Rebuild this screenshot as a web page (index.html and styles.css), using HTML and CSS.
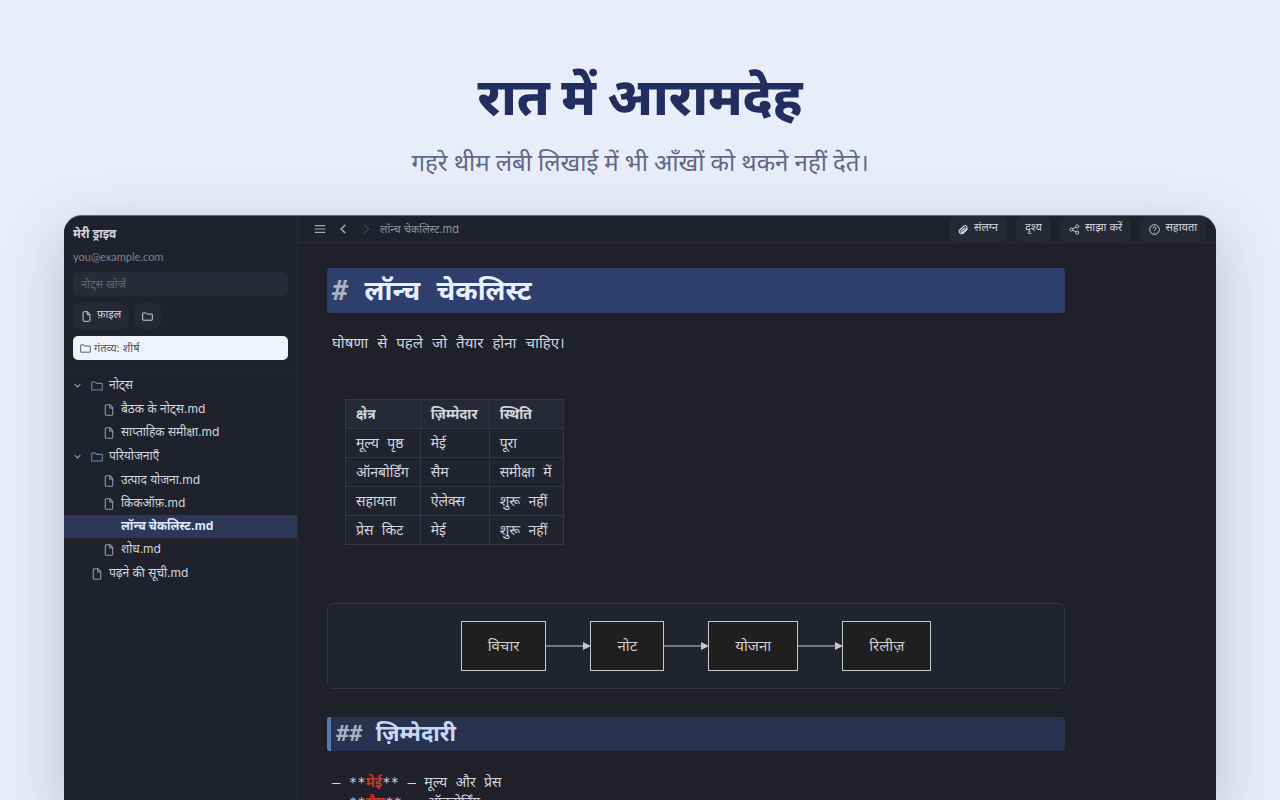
FILE: index.html
```html
<!DOCTYPE html>
<html lang="hi">
<head>
  <meta charset="UTF-8" />
  <meta name="viewport" content="width=device-width, initial-scale=1.0" />
  <title>रात में आरामदेह</title>
  <link rel="stylesheet" href="styles.css">
</head>
<body>
  <svg class="sprite" aria-hidden="true">
    <symbol id="file" viewBox="0 0 16 16">
      <path d="M9.5 1H4.200A1.200 1.200 0 0 0 3 2.200v11.600A1.200 1.200 0 0 0 4.200 15h7.600a1.200 1.200 0 0 0 1.200-1.200V4.800z M9 1.200v4h4" />
    </symbol>
    <symbol id="folder" viewBox="0 0 16 16">
      <path d="M1 13V3.300q0-.6.6-.6h4l1.600 1.800h7.200q.6 0 .6.6V13q0 .4-.4.400H1.400Q1 13.400 1 13z" />
    </symbol>
    <symbol id="down" viewBox="0 0 16 16">
      <path d="M3 5.5l5 5 5-5" />
    </symbol>
  </svg>

  <header class="hero">
    <h1>रात में आरामदेह</h1>
    <p>गहरे थीम लंबी लिखाई में भी आँखों को थकने नहीं देते।</p>
  </header>

  <div class="window">
    <aside class="sidebar">
      <div class="drive">
        <h2>मेरी ड्राइव</h2>
        <p class="email">you@example.com</p>
        <input type="search" class="search" placeholder="नोट्स खोजें" aria-label="नोट्स खोजें" />
        <div class="actions">
          <button class="btn"><svg class="icon"><use href="#file" /></svg><span>फ़ाइल</span></button>
          <button class="btn" aria-label="फ़ोल्डर"><svg class="icon"><use href="#folder" /></svg></button>
        </div>
        <button class="target"><svg class="icon"><use href="#folder" /></svg>गंतव्य: शीर्ष</button>
      </div>

      <ul class="tree">
        <li>
          <a href="#" class="row folder"><svg class="chevron"><use href="#down" /></svg><svg class="icon"><use href="#folder" /></svg>नोट्स</a>
          <ul>
            <li><a href="#" class="row"><svg class="icon"><use href="#file" /></svg>बैठक के नोट्स.md</a></li>
            <li><a href="#" class="row"><svg class="icon"><use href="#file" /></svg>साप्ताहिक समीक्षा.md</a></li>
          </ul>
        </li>
        <li>
          <a href="#" class="row folder"><svg class="chevron"><use href="#down" /></svg><svg class="icon"><use href="#folder" /></svg>परियोजनाएँ</a>
          <ul>
            <li><a href="#" class="row"><svg class="icon"><use href="#file" /></svg>उत्पाद योजना.md</a></li>
            <li><a href="#" class="row"><svg class="icon"><use href="#file" /></svg>किकऑफ़.md</a></li>
            <li><a href="#" class="row active"><svg class="icon"></svg>लॉन्च चेकलिस्ट.md</a></li>
            <li><a href="#" class="row"><svg class="icon"><use href="#file" /></svg>शोध.md</a></li>
          </ul>
        </li>
        <li><a href="#" class="row root"><svg class="icon"><use href="#file" /></svg>पढ़ने की सूची.md</a></li>
      </ul>
    </aside>

    <main class="main">
      <div class="toolbar">
        <button class="nav-btn" aria-label="मेनू"><svg viewBox="0 0 16 16"><path d="M1 3.500h14M1 8h14M1 12.500h14" /></svg></button>
        <button class="nav-btn back" aria-label="पीछे"><svg viewBox="0 0 16 16"><path d="M11 2.500L5.500 8l5.500 5.500" /></svg></button>
        <button class="nav-btn" aria-label="आगे" disabled><svg viewBox="0 0 16 16"><path d="M6 2.500L11.500 8L6 13.500" /></svg></button>
        <span class="filename">लॉन्च चेकलिस्ट.md</span>
        <div class="tools">
          <button class="btn"><svg class="icon" viewBox="0 0 16 16"><path d="M14 7l-6.200 6.200a3.400 3.400 0 0 1-4.900-4.800l5.600-5.300a2.600 2.600 0 0 1 3.700 3.700l-5.500 5.300a1.200 1.200 0 0 1-1.800-1.700l5-4.900" stroke-width="1.700" /></svg><span>संलग्न</span></button>
          <button class="btn"><span>दृश्य</span></button>
          <button class="btn"><svg class="icon" viewBox="0 0 16 16"><circle cx="3.500" cy="8" r="2.200" /><circle cx="12" cy="3.500" r="2.200" /><circle cx="12" cy="12.500" r="2.200" /><path d="M5.500 7l4.500-2.500M5.500 9l4.500 2.500" /></svg><span>साझा करें</span></button>
          <button class="btn"><svg class="icon" viewBox="0 0 16 16"><circle cx="8" cy="8" r="7" /><path d="M5.900 6.400a2.100 2.100 0 1 1 3.300 1.700c-.8.500-1.200.8-1.200 1.700M8 11.400v.9" /></svg><span>सहायता</span></button>
        </div>
      </div>

      <article class="doc">
        <h2 class="line-h1"><span class="mark">#</span> लॉन्च चेकलिस्ट</h2>
        <p class="intro">घोषणा से पहले जो तैयार होना चाहिए।</p>

        <table>
          <thead>
            <tr><th>क्षेत्र</th><th>ज़िम्मेदार</th><th>स्थिति</th></tr>
          </thead>
          <tbody>
            <tr><td>मूल्य पृष्ठ</td><td>मेई</td><td>पूरा</td></tr>
            <tr><td>ऑनबोर्डिंग</td><td>सैम</td><td>समीक्षा में</td></tr>
            <tr><td>सहायता</td><td>ऐलेक्स</td><td>शुरू नहीं</td></tr>
            <tr><td>प्रेस किट</td><td>मेई</td><td>शुरू नहीं</td></tr>
          </tbody>
        </table>

        <div class="diagram">
          <div class="node">विचार</div>
          <svg class="arrow" viewBox="0 0 44 10"><path d="M0 5h38" /><path class="head" d="M37 1l8 4-8 4z" /></svg>
          <div class="node">नोट</div>
          <svg class="arrow" viewBox="0 0 44 10"><path d="M0 5h38" /><path class="head" d="M37 1l8 4-8 4z" /></svg>
          <div class="node">योजना</div>
          <svg class="arrow" viewBox="0 0 44 10"><path d="M0 5h38" /><path class="head" d="M37 1l8 4-8 4z" /></svg>
          <div class="node">रिलीज़</div>
        </div>

        <h3 class="line-h2"><span class="mark">##</span> ज़िम्मेदारी</h3>
        <p>— **<strong>मेई</strong>** — मूल्य और प्रेस</p>
        <p>— **<strong>सैम</strong>** — ऑनबोर्डिंग</p>
      </article>
    </main>
  </div>
</body>
</html>
```

FILE: styles.css
```css
* {
  box-sizing: border-box;
}

body {
  margin: 0;
  height: 100vh;
  display: flex;
  flex-direction: column;
  overflow: hidden;
  background-color: #e9edf9;
  font-family: Inter, "Noto Sans Devanagari", "Noto Sans", sans-serif;
}

h1, h2, h3, p, ul {
  margin: 0;
  padding: 0;
}

ul {
  list-style: none;
}

button, input {
  font-family: inherit;
  border: none;
  margin: 0;
}

a {
  color: inherit;
  text-decoration: none;
}

svg {
  fill: none;
  stroke: currentColor;
  stroke-width: 1.4;
  flex: none;
}

.sprite {
  position: absolute;
  width: 0;
  height: 0;
}

.hero {
  padding-top: 55px;
  height: 215px;
  flex: none;
  text-align: center;
}

.hero h1 {
  font-size: 52px;
  font-weight: 800;
  line-height: 84px;
  color: #222e5e;
}

.hero p {
  margin-top: 5px;
  font-family: Lato, "Noto Sans Devanagari", "Noto Sans", sans-serif;
  font-size: 24px;
  line-height: 36px;
  color: #5f6884;
}

.window {
  flex: 1;
  min-height: 0;
  display: flex;
  margin: 0 64px;
  overflow: hidden;
  border-radius: 18px 18px 0 0;
  border-top: 1px solid #62656f;
  background-color: #1f2029;
  color: #d3d6df;
  box-shadow: 0 20px 60px rgba(34, 46, 94, 0.25);
}

.icon {
  width: 12px;
  height: 12px;
}

/* sidebar */
.sidebar {
  width: 234px;
  flex: none;
  background-color: #1f222c;
  border-right: 1px solid #292c37;
}

.drive {
  padding: 9px 9px 11px;
  border-bottom: 1px solid #242732;
}

.drive h2 {
  font-size: 12px;
  line-height: 18px;
}

.email {
  margin-top: 5px;
  font-family: Lato, sans-serif;
  font-size: 11px;
  line-height: 18px;
  color: #7e818c;
}

.search {
  display: block;
  width: 100%;
  height: 24px;
  margin-top: 6px;
  padding: 0 8px;
  border-radius: 5px;
  background-color: #292c38;
  color: #d3d6df;
  font-size: 11px;
}

.search::placeholder {
  color: #646772;
}

.actions {
  display: flex;
  gap: 5px;
  margin-top: 7px;
}

.btn {
  display: flex;
  align-items: center;
  gap: 5px;
  height: 26px;
  padding: 0 9px;
  border-radius: 6px;
  background-color: #262934;
  color: #d3d6df;
  font-size: 11px;
  line-height: 16px;
}

.btn span {
  padding-bottom: 4px;
}

.btn .icon {
  width: 11px;
  height: 11px;
}

.actions .btn {
  padding: 0 8px;
}

.target {
  display: flex;
  align-items: center;
  gap: 3px;
  width: 100%;
  height: 24px;
  margin-top: 7px;
  padding: 0 7px;
  border-radius: 5px;
  background-color: #eff2f8;
  color: #515968;
  font-size: 11px;
}

.target .icon {
  width: 11px;
  height: 11px;
}

.tree {
  padding-top: 2px;
}

.tree ul {
  padding: 1px 0;
}

.row {
  display: flex;
  align-items: center;
  gap: 6px;
  height: 23px;
  padding-left: 39px;
  font-size: 12px;
  white-space: nowrap;
}

.row .icon {
  color: #9a9dab;
}

.folder {
  padding-left: 9px;
}

.folder .icon {
  color: #6f83b5;
}

.chevron {
  width: 9px;
  height: 9px;
  margin-right: 3px;
  color: #9a9dab;
  stroke-width: 2;
}

.root {
  padding-left: 27px;
}

.active {
  background-color: #2d3858;
  color: #dfe7ff;
  font-weight: bold;
}

/* editor */
.main {
  flex: 1;
  min-width: 0;
}

.toolbar {
  display: flex;
  align-items: center;
  height: 27px;
  padding: 0 10px 0 16px;
  border-bottom: 1px solid #282a35;
  background-color: #1f222c;
}

.nav-btn {
  display: flex;
  padding: 0;
  margin-right: 11px;
  background: none;
  color: #a2a5b1;
}

.nav-btn svg {
  width: 12px;
  height: 12px;
}

.back svg {
  stroke-width: 2;
}

.nav-btn:disabled {
  margin-right: 8px;
  color: #4a4d59;
}

.filename {
  font-size: 11px;
  color: #8e919d;
}

.tools {
  display: flex;
  gap: 9px;
  margin-left: auto;
}

.doc {
  max-width: 767px;
  padding: 25px 0 0 29px;
  font-family: "DejaVu Sans Mono", "Noto Sans Devanagari", monospace;
  font-size: 14px;
  line-height: 20px;
}

.mark {
  color: #a9b1c0;
}

.line-h1 {
  padding: 0 5px;
  border-radius: 4px;
  background-color: #2e3f6e;
  color: #e6eeff;
  font-size: 27px;
  line-height: 45px;
}

.doc p {
  padding: 0 5px;
}

.doc .intro {
  margin-top: 20px;
  font-size: 15px;
}

table {
  margin: 46px 0 0 18px;
  border-collapse: collapse;
  background-color: #21242e;
}

th, td {
  height: 29px;
  padding: 0 11px 0 10px;
  border: 1px solid #343743;
  text-align: left;
}

th {
  background-color: #272a36;
}

.diagram {
  display: flex;
  align-items: center;
  justify-content: center;
  height: 86px;
  margin-top: 58px;
  border: 1px solid #323540;
  border-radius: 6px;
  background-color: #21242f;
}

.node {
  padding: 0 26px;
  border: 1px solid #c6c8c8;
  background-color: #1f1f1f;
  color: #cccccc;
  font-family: Inter, "Noto Sans Devanagari", "Noto Sans", sans-serif;
  font-size: 15px;
  line-height: 48px;
}

.arrow {
  width: 44px;
  height: 10px;
  color: #c6c8cc;
  stroke-width: 1;
  overflow: visible;
}

.head {
  fill: currentColor;
  stroke: none;
}

.line-h2 {
  margin: 28px 0 21px;
  padding: 0 5px;
  border-left: 4px solid #5878b8;
  border-radius: 3px;
  background-color: #27324f;
  color: #c9d8f8;
  font-size: 22px;
  line-height: 34px;
}

.doc strong {
  color: #c9382c;
}
```
